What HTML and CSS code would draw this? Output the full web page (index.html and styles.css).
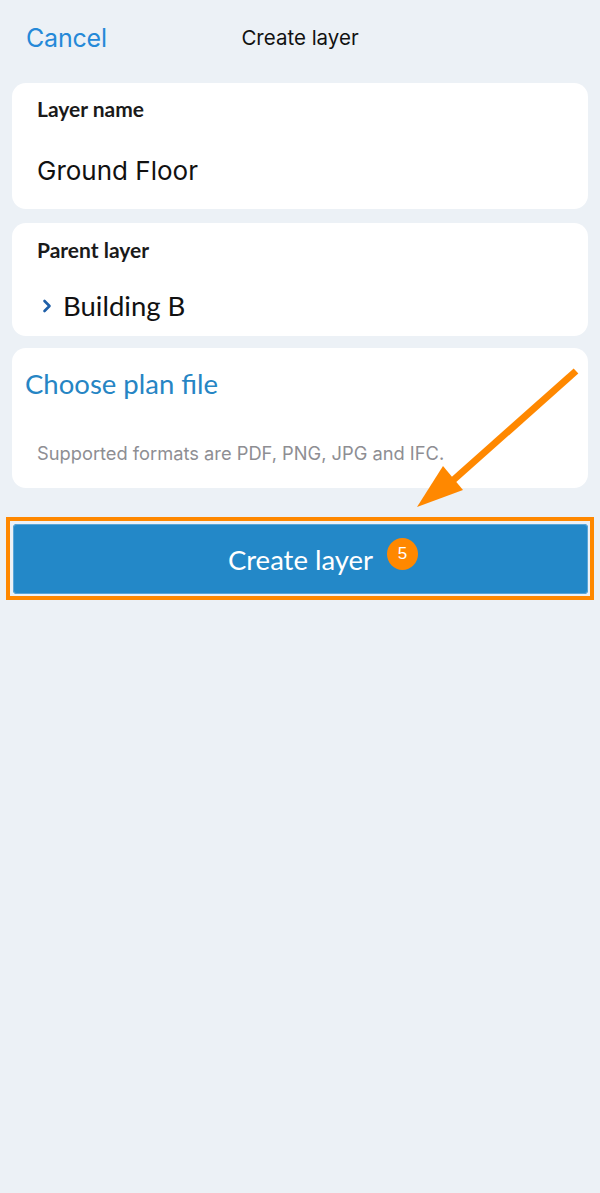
FILE: index.html
```html
<!DOCTYPE html>
<html lang="en">
<head>
<meta charset="utf-8">
<title>Create layer</title>
<link rel="stylesheet" href="styles.css">
</head>
<body>
<div class="page">
  <header class="header">
    <span class="cancel">Cancel</span>
    <span class="title">Create layer</span>
    <span></span>
  </header>

  <section class="card card-name">
    <div class="label">Layer name</div>
    <div class="value-sf">Ground Floor</div>
  </section>

  <section class="card card-parent">
    <div class="label">Parent layer</div>
    <div class="parent-row">
      <svg class="chevron" width="10" height="14" viewBox="0 0 10 14"><path d="M2.5 2 L7.5 7 L2.5 12" fill="none" stroke="#1e5fa8" stroke-width="2.6" stroke-linecap="round" stroke-linejoin="round"/></svg>
      <span class="value-lato">Building B</span>
    </div>
  </section>

  <section class="card card-file">
    <div class="choose">Choose plan file</div>
    <div class="hint">Supported formats are PDF, PNG, JPG and IFC.</div>
  </section>

  <div class="highlight">
    <div class="btn">
      <span class="btn-text">Create layer</span>
      <span class="badge">5</span>
    </div>
  </div>

  <svg class="arrow" width="600" height="1193" viewBox="0 0 600 1193">
    <line x1="576" y1="371" x2="450" y2="483" stroke="#ff8800" stroke-width="7"/>
    <polygon points="417,507 443,466 463,490" fill="#ff8800"/>
  </svg>
</div>
</body>
</html>
```

FILE: styles.css
```css
html, body {
  margin: 0;
  padding: 0;
  background: #ecf1f6;
}
.page {
  position: relative;
  width: 600px;
  min-height: 1193px;
  background: #ecf1f6;
  font-family: Inter, "Noto Sans", sans-serif;
}
.header {
  display: grid;
  grid-template-columns: 1fr auto 1fr;
  align-items: center;
  height: 75px;
  padding: 0 26px;
  box-sizing: border-box;
}
.cancel {
  font-family: Inter, sans-serif;
  font-size: 25px;
  color: #2589d8;
  letter-spacing: -0.2px;
}
.title {
  font-family: Inter, sans-serif;
  font-size: 20.5px;
  color: #111;
}
.card {
  background: #fff;
  border-radius: 14px;
  margin: 0 12px;
  padding-left: 25px;
  padding-right: 25px;
}
.card-name {
  margin-top: 8px;
  padding-top: 15px;
  padding-bottom: 22px;
}
.card-parent {
  margin-top: 14px;
  padding-top: 16px;
  padding-bottom: 14px;
}
.card-file {
  margin-top: 12px;
  padding-left: 13px;
  padding-top: 20px;
  padding-bottom: 24px;
}
.label {
  font-family: Lato, sans-serif;
  font-weight: 700;
  font-size: 21px;
  line-height: 22px;
  color: #1a1a1a;
}
.value-sf {
  margin-top: 35px;
  font-family: Inter, sans-serif;
  font-size: 26px;
  line-height: 32px;
  color: #111;
}
.parent-row {
  margin-top: 29px;
  display: flex;
  align-items: center;
  gap: 11px;
  padding-left: 5px;
}
.chevron {
  display: block;
}
.value-lato {
  font-family: Lato, sans-serif;
  font-size: 27.5px;
  line-height: 32px;
  color: #111;
}
.choose {
  font-family: Lato, sans-serif;
  font-size: 27.5px;
  line-height: 32px;
  color: #2685c4;
}
.hint {
  margin-top: 42px;
  padding-left: 12px;
  font-family: Inter, sans-serif;
  font-size: 18.3px;
  line-height: 22px;
  color: #8e8e93;
}
.highlight {
  margin: 29px 6px 0;
  border: 4px solid #ff8800;
  padding: 3px 2px 2px 3px;
}
.btn {
  position: relative;
  height: 70px;
  background: #2388c8;
  border-radius: 4px;
  box-shadow: inset 0 0 0 1px #5aa6d8;
  display: flex;
  align-items: center;
  justify-content: center;
}
.btn-text {
  font-family: Lato, sans-serif;
  font-size: 27.5px;
  color: #fff;
}
.badge {
  position: absolute;
  left: 374px;
  top: 14px;
  width: 31px;
  height: 32px;
  border-radius: 50%;
  background: #ff8800;
  color: #fff;
  font-family: "Liberation Sans", sans-serif;
  font-size: 17px;
  display: flex;
  align-items: center;
  justify-content: center;
}
.arrow {
  position: absolute;
  left: 0;
  top: 0;
  pointer-events: none;
}
```
